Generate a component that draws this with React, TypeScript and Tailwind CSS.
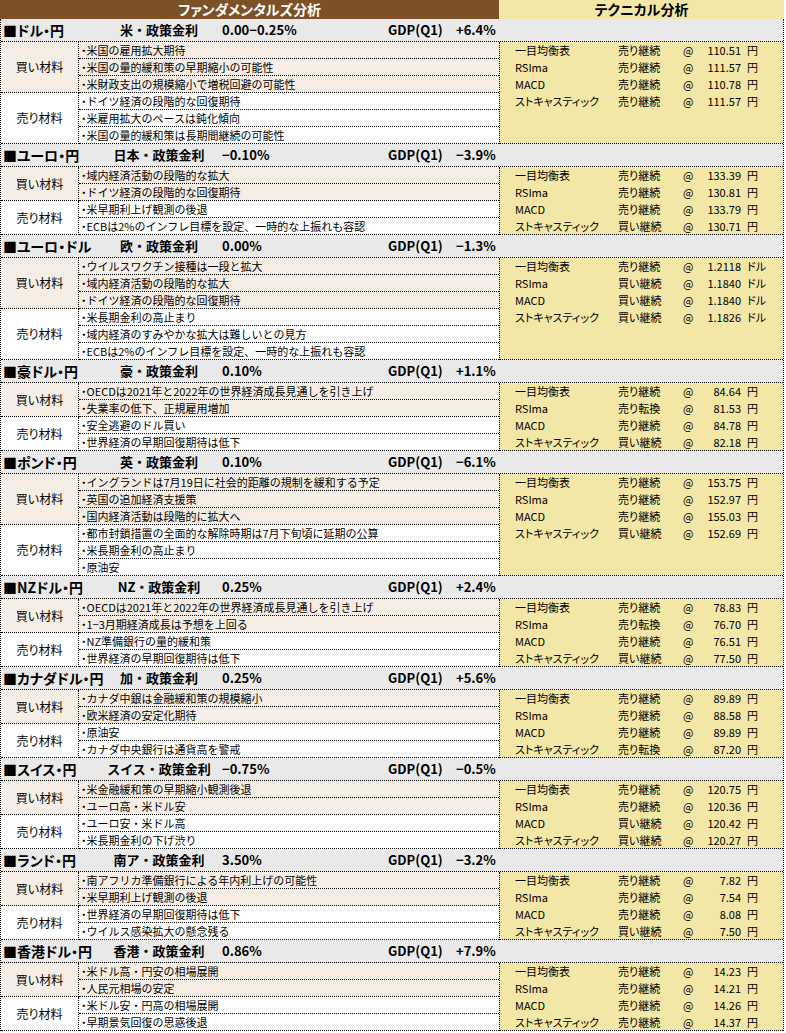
import React from 'react'

type Tech = [string, string]

type Section = {
  pair: string
  policy: string
  rate: string
  gdp: string
  buy: string[]
  sell: string[]
  tech: Tech[]
  unit?: string
}

const INDICATORS = ['一目均衡表', 'RSIma', 'MACD', 'ストキャスティック']

const sections: Section[] = [
  {
    pair: '■ドル・円',
    policy: '米・政策金利',
    rate: '0.00−0.25%',
    gdp: '+6.4%',
    buy: ['米国の雇用拡大期待', '米国の量的緩和策の早期縮小の可能性', '米財政支出の規模縮小で増税回避の可能性'],
    sell: ['ドイツ経済の段階的な回復期待', '米雇用拡大のペースは鈍化傾向', '米国の量的緩和策は長期間継続の可能性'],
    tech: [['売り継続', '110.51'], ['売り継続', '111.57'], ['売り継続', '110.78'], ['売り継続', '111.57']],
  },
  {
    pair: '■ユーロ・円',
    policy: '日本・政策金利',
    rate: '−0.10%',
    gdp: '−3.9%',
    buy: ['域内経済活動の段階的な拡大', 'ドイツ経済の段階的な回復期待'],
    sell: ['米早期利上げ観測の後退', 'ECBは2%のインフレ目標を設定、一時的な上振れも容認'],
    tech: [['売り継続', '133.39'], ['売り継続', '130.81'], ['売り継続', '133.79'], ['買い継続', '130.71']],
  },
  {
    pair: '■ユーロ・ドル',
    policy: '欧・政策金利',
    rate: '0.00%',
    gdp: '−1.3%',
    buy: ['ウイルスワクチン接種は一段と拡大', '域内経済活動の段階的な拡大', 'ドイツ経済の段階的な回復期待'],
    sell: ['米長期金利の高止まり', '域内経済のすみやかな拡大は難しいとの見方', 'ECBは2%のインフレ目標を設定、一時的な上振れも容認'],
    tech: [['売り継続', '1.2118'], ['買い継続', '1.1840'], ['買い継続', '1.1840'], ['買い継続', '1.1826']],
    unit: 'ドル',
  },
  {
    pair: '■豪ドル・円',
    policy: '豪・政策金利',
    rate: '0.10%',
    gdp: '+1.1%',
    buy: ['OECDは2021年と2022年の世界経済成長見通しを引き上げ', '失業率の低下、正規雇用増加'],
    sell: ['安全逃避のドル買い', '世界経済の早期回復期待は低下'],
    tech: [['売り継続', '84.64'], ['売り転換', '81.53'], ['売り継続', '84.78'], ['買い継続', '82.18']],
  },
  {
    pair: '■ポンド・円',
    policy: '英・政策金利',
    rate: '0.10%',
    gdp: '−6.1%',
    buy: ['イングランドは7月19日に社会的距離の規制を緩和する予定', '英国の追加経済支援策', '国内経済活動は段階的に拡大へ'],
    sell: ['都市封鎖措置の全面的な解除時期は7月下旬頃に延期の公算', '米長期金利の高止まり', '原油安'],
    tech: [['売り継続', '153.75'], ['売り継続', '152.97'], ['売り継続', '155.03'], ['買い継続', '152.69']],
  },
  {
    pair: '■NZドル・円',
    policy: 'NZ・政策金利',
    rate: '0.25%',
    gdp: '+2.4%',
    buy: ['OECDは2021年と2022年の世界経済成長見通しを引き上げ', '1−3月期経済成長は予想を上回る'],
    sell: ['NZ準備銀行の量的緩和策', '世界経済の早期回復期待は低下'],
    tech: [['売り継続', '78.83'], ['売り転換', '76.70'], ['売り継続', '76.51'], ['買い継続', '77.50']],
  },
  {
    pair: '■カナダドル・円',
    policy: '加・政策金利',
    rate: '0.25%',
    gdp: '+5.6%',
    buy: ['カナダ中銀は金融緩和策の規模縮小', '欧米経済の安定化期待'],
    sell: ['原油安', 'カナダ中央銀行は通貨高を警戒'],
    tech: [['売り継続', '89.89'], ['売り継続', '88.58'], ['売り継続', '89.89'], ['売り転換', '87.20']],
  },
  {
    pair: '■スイス・円',
    policy: 'スイス・政策金利',
    rate: '−0.75%',
    gdp: '−0.5%',
    buy: ['米金融緩和策の早期縮小観測後退', 'ユーロ高・米ドル安'],
    sell: ['ユーロ安・米ドル高', '米長期金利の下げ渋り'],
    tech: [['売り継続', '120.75'], ['売り継続', '120.36'], ['買い継続', '120.42'], ['買い継続', '120.27']],
  },
  {
    pair: '■ランド・円',
    policy: '南ア・政策金利',
    rate: '3.50%',
    gdp: '−3.2%',
    buy: ['南アフリカ準備銀行による年内利上げの可能性', '米早期利上げ観測の後退'],
    sell: ['世界経済の早期回復期待は低下', 'ウイルス感染拡大の懸念残る'],
    tech: [['売り継続', '7.82'], ['売り継続', '7.54'], ['売り継続', '8.08'], ['買い継続', '7.50']],
  },
  {
    pair: '■香港ドル・円',
    policy: '香港・政策金利',
    rate: '0.86%',
    gdp: '+7.9%',
    buy: ['米ドル高・円安の相場展開', '人民元相場の安定'],
    sell: ['米ドル安・円高の相場展開', '早期景気回復の思惑後退'],
    tech: [['売り継続', '14.23'], ['売り継続', '14.21'], ['売り継続', '14.26'], ['売り継続', '14.37']],
  },
]

function Group({ label, items, bg }: { label: string; items: string[]; bg: string }) {
  return (
    <div className={`flex ${bg}`}>
      <div className="flex w-[78px] shrink-0 items-center justify-center border-r border-b border-dotted border-black text-[12px]">
        {label}
      </div>
      <div className="flex-1">
        {items.map((t) => (
          <div
            key={t}
            className="h-[17px] overflow-hidden whitespace-nowrap border-b border-dotted border-black pl-[2px] text-[11px] leading-[16px] [font-feature-settings:normal]"
          >
            <span className="[font-feature-settings:'palt']">・</span>
            {t}
          </div>
        ))}
      </div>
    </div>
  )
}

function Block({ s }: { s: Section }) {
  const unit = s.unit ?? '円'
  return (
    <div>
      {/* section header */}
      <div className="flex h-[23px] items-center whitespace-nowrap border-b border-dotted border-black bg-[#e9e9e9] text-[13px] font-bold">
        <div className="w-[99px] shrink-0 pl-[2px] text-[14px]">{s.pair}</div>
        <div className="w-[118px] shrink-0 text-center [font-feature-settings:normal]">{s.policy}</div>
        <div className="w-[170px] shrink-0 pl-[4px]">{s.rate}</div>
        <div className="w-[68px] shrink-0">GDP(Q1)</div>
        <div>{s.gdp}</div>
      </div>
      <div className="flex">
        <div className="w-[498px] shrink-0">
          <Group label="買い材料" items={s.buy} bg="bg-[#f6eee5]" />
          <Group label="売り材料" items={s.sell} bg="bg-white" />
        </div>
        <div className="flex-1 border-l border-b border-dotted border-black bg-[#f3e7a7] pl-[15px]">
          {/* rows float so the panel height follows the left side */}
          <div className="h-0 overflow-visible">
            {s.tech.map(([sig, num], i) => (
              <div key={i} className="flex h-[17px] items-center whitespace-nowrap text-[11px]">
                <div className="w-[103px]">{INDICATORS[i]}</div>
                <div className="w-[65px]">{sig}</div>
                <div className="w-[20px]">@</div>
                <div className="w-[38px] text-right">{num}</div>
                <div className="ml-[6px]">{unit}</div>
              </div>
            ))}
          </div>
        </div>
      </div>
    </div>
  )
}

export default function App() {
  return (
    <div
      className="w-[786px] bg-white text-black [font-feature-settings:'palt']"
      style={{ fontFamily: '"Noto Sans CJK JP", "Noto Sans", sans-serif' }}
    >
      {/* top header */}
      <div className="flex h-[19px] w-[784px] text-[14px] font-bold leading-[19px]">
        <div className="w-[499px] bg-[#7c5128] text-center text-white">ファンダメンタルズ分析</div>
        <div className="flex-1 bg-[#f3e7a7] text-center">テクニカル分析</div>
      </div>
      <div className="w-[784px] border-x border-dotted border-black">
        {sections.map((s) => (
          <Block key={s.pair} s={s} />
        ))}
      </div>
    </div>
  )
}
